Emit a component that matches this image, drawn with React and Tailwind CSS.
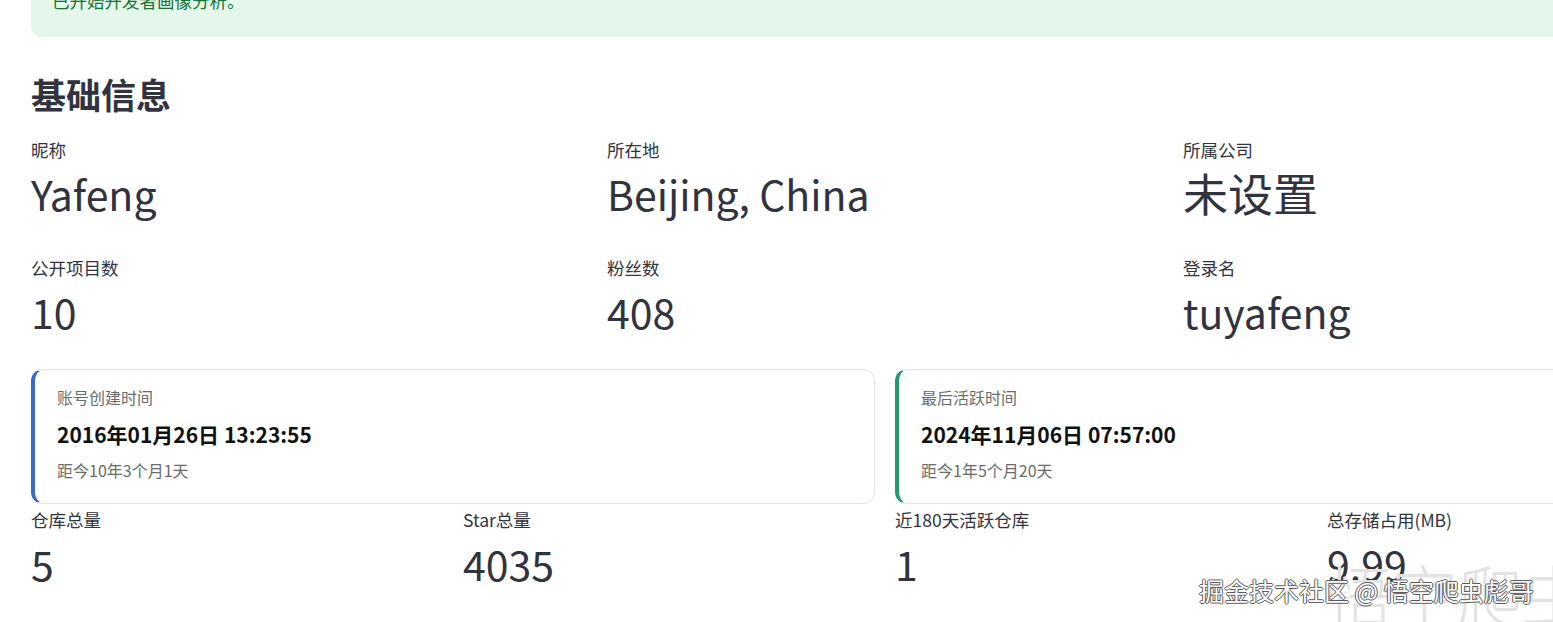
import React from "react";

const font = { fontFamily: '"Noto Sans CJK SC", "Noto Sans", sans-serif' };

function Metric({ label, value, cjk }) {
  return (
    <div className="min-w-0">
      <div className="text-[17.5px] leading-[24px] text-[#31333f] whitespace-nowrap">{label}</div>
      {cjk ? (
        <div className="mt-[4px] text-[45px] leading-[54px] text-[#31333f] whitespace-nowrap">{value}</div>
      ) : (
        <div className="mt-[5px] text-[41px] leading-[53px] text-[#31333f] whitespace-nowrap">{value}</div>
      )}
    </div>
  );
}

function TimeCard({ label, date, ago, color }) {
  return (
    <div className={`border border-[#e4e4e7] border-l-4 ${color} rounded-[12px] pl-[22px] pt-[15px] pb-[21px]`}>
      <div className="text-[16px] leading-[24px] text-[#6b6b6b]">{label}</div>
      <div className="mt-[10px] text-[21px] leading-[30px] font-bold text-[#111111]">{date}</div>
      <div className="mt-[9px] text-[16px] leading-[24px] text-[#6b6b6b]">{ago}</div>
    </div>
  );
}

export default function App() {
  return (
    <div className="relative w-[1553px] h-[622px] overflow-hidden bg-white" style={font}>
      <div className="w-[1708px] ml-[31px]">
        <div className="-mt-[28px] bg-[#e5f7eb] rounded-[10px] pl-[21px] pt-4 pb-[23px] text-[17.5px] leading-[25.6px] text-[#177233]">
          已开始开发者画像分析。
        </div>

        <h2 className="mt-[35px] text-[35px] leading-[44px] font-bold text-[#31333f]">基础信息</h2>

        <div className="mt-[22px] grid grid-cols-3 gap-x-[20px] gap-y-[36px]">
          <Metric label="昵称" value="Yafeng" />
          <Metric label="所在地" value="Beijing, China" />
          <Metric label="所属公司" value="未设置" cjk />
          <Metric label="公开项目数" value="10" />
          <Metric label="粉丝数" value="408" />
          <Metric label="登录名" value="tuyafeng" />
        </div>

        <div className="mt-[31px] grid grid-cols-2 gap-x-[20px]">
          <TimeCard
            label="账号创建时间"
            date="2016年01月26日 13:23:55"
            ago="距今10年3个月1天"
            color="border-l-[#3a6bc9]"
          />
          <TimeCard
            label="最后活跃时间"
            date="2024年11月06日 07:57:00"
            ago="距今1年5个月20天"
            color="border-l-[#239a6e]"
          />
        </div>

        <div className="mt-[4px] grid grid-cols-4 gap-x-[20px]">
          <Metric label="仓库总量" value="5" />
          <Metric label="Star总量" value="4035" />
          <Metric label="近180天活跃仓库" value="1" />
          <Metric label="总存储占用(MB)" value="9.99" />
        </div>
      </div>

      <div className="pointer-events-none absolute left-[1326px] top-[553px] text-[67px] leading-[80px] font-light text-[#e3e3e3] whitespace-nowrap tracking-[-2px]">
        悟空爬虫
      </div>
      <div className="pointer-events-none absolute left-[1199px] top-[572px] text-[25px] leading-[36px] text-white whitespace-nowrap [text-shadow:1px_0_#5a5a5a,-1px_0_#5a5a5a,0_1px_#5a5a5a,0_-1px_#5a5a5a]">
        掘金技术社区 @ 悟空爬虫彪哥
      </div>
    </div>
  );
}
